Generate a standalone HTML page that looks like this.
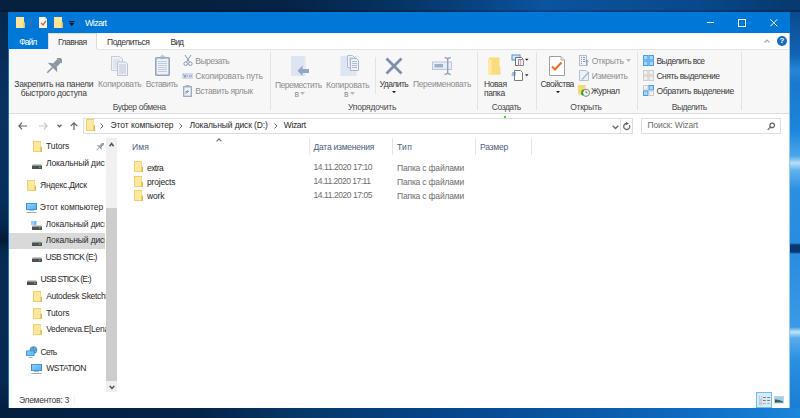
<!DOCTYPE html>
<html><head><meta charset="utf-8">
<style>
*{margin:0;padding:0;box-sizing:border-box}
html,body{width:800px;height:418px;overflow:hidden}
body{position:relative;font-family:"Liberation Sans",sans-serif;font-size:8.5px;color:#1e1e1e;
background:#062a55}
.a{position:absolute;white-space:nowrap}
.t{position:absolute;white-space:nowrap;line-height:10px;height:10px}
.dis{color:#8a8a8a}
.sep{position:absolute;width:1px;background:#e2e3e4}
.lbl{color:#4a4a4a}
</style></head><body>
<!-- wallpaper -->
<div class="a" style="left:0;top:0;width:800px;height:12px;background:linear-gradient(90deg,#06203f 0%,#06203f 25%,#062448 37%,#063464 50%,#084484 60%,#0b54a0 68%,#0a4f96 76%,#08498c 87%,#073a70 98%)"></div>
<div class="a" style="left:0;top:10px;width:800px;height:2px;background:rgba(0,10,30,0.25)"></div>
<div class="a" style="left:0;top:12px;width:8px;height:396px;background:linear-gradient(180deg,#05284f 0.00%,#0a3260 22.22%,#06305c 47.47%,#05284e 53.54%,#031a38 57.58%,#05284e 60.10%,#062c56 65.15%,#062a52 92.93%,#04203f 100.00%)"></div>
<div class="a" style="left:790px;top:12px;width:10px;height:396px;background:linear-gradient(180deg,#0b4a90 0.00%,#1164b4 10.86%,#2585d6 14.65%,#1a78cc 18.43%,#1b86dc 29.80%,#4aa6ea 36.36%,#b8def8 38.13%,#62b4ee 39.90%,#2a90e0 44.95%,#2a8ce0 58.33%,#083870 58.84%,#083870 60.61%,#2a8ce0 61.11%,#3a9ae6 79.55%,#c0e4fa 80.81%,#58acee 82.32%,#2a90e0 87.88%,#1a7ed4 100.00%)"></div>
<div class="a" style="left:0;top:408px;width:800px;height:10px;background:linear-gradient(90deg,#05203f 0%,#04244a 25%,#053866 37%,#064080 50%,#074b94 62%,#0a5aaa 75%,#0f6cc4 87%,#1a86dc 100%)"></div>
<!-- window frame -->
<div class="a" style="left:8px;top:12px;width:782px;height:396px;background:#fff;border-left:1px solid #1c6fc4"></div>
<div class="a" style="left:789px;top:33px;width:1px;height:375px;background:#9cc8ee"></div>
<!-- title bar -->
<div class="a" style="left:8px;top:12px;width:782px;height:21px;background:#0078d7"></div>
<svg class="a" style="left:16px;top:17px" width="9" height="11" viewBox="0 0 9 11"><rect x="0" y="0" width="8" height="11" fill="#fce59a"/><path d="M7.5 5.5 L9 5 V11 H7.5Z" fill="#e6bd4f"/></svg>
<div class="a" style="left:30px;top:18px;width:1.5px;height:8.5px;background:#2f70b8"></div>
<svg class="a" style="left:39px;top:17px" width="8" height="11" viewBox="0 0 8 11"><path d="M0 0H6L8 2V11H0Z" fill="#f6f6f6"/><path d="M6 0V2H8" fill="#ccc"/></svg>
<svg class="a" style="left:40px;top:20px" width="7" height="6" viewBox="0 0 7 6"><path d="M1 3 L3 5 L6 1" stroke="#e8632b" stroke-width="1.3" fill="none"/></svg>
<svg class="a" style="left:54px;top:17px" width="9" height="11" viewBox="0 0 9 11"><rect x="0" y="0" width="8" height="11" fill="#fce59a"/><path d="M7.5 5.5 L9 5 V11 H7.5Z" fill="#e6bd4f"/></svg>
<svg class="a" style="left:68.5px;top:21px" width="6" height="6" viewBox="0 0 6 6"><rect x="0" y="0" width="5.5" height="0.9" fill="#111"/><path d="M0 1.8 L5.5 1.8 L2.75 5Z" fill="#111"/></svg>
<div class="a" style="left:78.5px;top:18px;width:1.5px;height:8.5px;background:#2f70b8"></div>
<div class="a" style="left:706.5px;top:22px;width:7.5px;height:1px;background:#fff"></div>
<svg class="a" style="left:737px;top:18px" width="10" height="10" viewBox="0 0 10 10"><rect x="1.5" y="1.5" width="7" height="7" fill="none" stroke="#fff" stroke-width="1"/></svg>
<svg class="a" style="left:770px;top:18.5px" width="8" height="8" viewBox="0 0 8 8"><path d="M0.3 0.3L7.3 7.3M7.3 0.3L0.3 7.3" stroke="#fff" stroke-width="1"/></svg>
<!-- tabs -->
<div class="a" style="left:8px;top:33px;width:40px;height:16px;background:#0078d7"></div>
<div class="a" style="left:48px;top:33px;width:49px;height:17px;background:#f7f7f8;border:1px solid #dadbdc;border-bottom:none"></div>
<svg class="a" style="left:763.5px;top:38.5px" width="6" height="4" viewBox="0 0 6 4"><path d="M0.5 3.5L3 1L5.5 3.5" stroke="#aaa" stroke-width="1.2" fill="none"/></svg>
<div class="a" style="left:777px;top:36px;width:10px;height:10px;border-radius:50%;background:#1a6cc0;color:#fff;font-size:8px;font-weight:bold;text-align:center;line-height:10px">?</div>
<!-- ribbon -->
<div class="a" style="left:9px;top:49px;width:780px;height:65px;background:#f7f7f8;border-bottom:1px solid #dcdddf"></div>
<div class="a" style="left:97px;top:49px;width:692px;height:1px;background:#e2e3e4"></div>
<!-- pin -->
<svg class="a" style="left:46px;top:58px" width="16" height="16" viewBox="0 0 16 16"><g transform="translate(8.3,7.7) rotate(45) translate(0,-10)" fill="#8b95a0"><rect x="-4.6" y="0" width="9.2" height="3"/><rect x="-2.6" y="3" width="5.2" height="6"/><path d="M-2.6 9 L-6.8 12.5 L6.8 12.5 L2.6 9Z"/><rect x="-0.8" y="12.5" width="1.6" height="7.5"/></g></svg>
<!-- copy -->
<svg class="a" style="left:111px;top:56px" width="17" height="20" viewBox="0 0 17 20"><path d="M0.5 0.5H9L11.5 3V14.5H0.5Z" fill="#eef2f8" stroke="#c2ccda"/><path d="M2 4H9M2 6H9M2 8H9M2 10H9M2 12H9" stroke="#d0d8e4"/><path d="M6.5 6H14.5L16.5 8V19.5H6.5Z" fill="#eef2f8" stroke="#b8c3d3"/><path d="M8 9H15M8 11H15M8 13H15M8 15H15M8 17H15" stroke="#bac4d2"/></svg>
<!-- paste -->
<svg class="a" style="left:155px;top:55px" width="15" height="21" viewBox="0 0 15 21"><rect x="0.8" y="2.8" width="13.4" height="17.4" rx="0.8" fill="#eef2f8" stroke="#94a4bc" stroke-width="1.6"/><path d="M3 6.5H12M3 8.5H12M3 10.5H12M3 12.5H12M3 14.5H12M3 16.5H12" stroke="#c2cbd8"/><path d="M5 1.5H10V4H5Z" fill="#a6b3c6"/><rect x="6.5" y="0" width="2" height="2" fill="#b4bfd0"/></svg>
<!-- small clipboard items -->
<svg class="a" style="left:183px;top:55px" width="10" height="11" viewBox="0 0 10 11"><path d="M2 0 L6.5 7 M8 0 L3.5 7" stroke="#8896b0" stroke-width="1"/><circle cx="2.7" cy="8.7" r="1.8" fill="none" stroke="#8896b0"/><circle cx="7.3" cy="8.7" r="1.8" fill="none" stroke="#8896b0"/></svg>
<svg class="a" style="left:182px;top:73px" width="11" height="6" viewBox="0 0 11 6"><rect x="0" y="0" width="11" height="6" fill="#d2dbea"/><path d="M1.5 1.5L3 4.5M4 1.5L3 4.5M5 3H5.8M7 3H10" stroke="#7f8ea8" stroke-width="0.9"/></svg>
<svg class="a" style="left:183px;top:85px" width="9" height="12" viewBox="0 0 9 12"><rect x="0.7" y="1.7" width="7.6" height="9.6" fill="#eef2f8" stroke="#94a4bc" stroke-width="1.2"/><rect x="2.5" y="0" width="4" height="2.2" fill="#a6b3c6"/><path d="M3 9V6.5H5.5 M4.2 5.2L5.5 6.5L4.2 7.8" stroke="#7b8ca6" fill="none" stroke-width="0.9"/></svg>
<div class="sep" style="left:270px;top:52px;height:58px"></div>
<!-- organize -->
<svg class="a" style="left:291px;top:56px" width="19" height="20" viewBox="0 0 19 20"><rect x="0" y="0" width="15" height="20" fill="#dce5f1"/><rect x="13.5" y="0" width="1.5" height="20" fill="#e8eef6"/><path d="M6.5 14.8 L11.5 9.5 V13 H18 V17 H11.5 V20Z" fill="#94a6c4"/></svg>
<svg class="a" style="left:300px;top:92px" width="5" height="3" viewBox="0 0 5 3"><path d="M0 0H5L2.5 3Z" fill="#b8b8b8"/></svg>
<svg class="a" style="left:340px;top:55px" width="20" height="21" viewBox="0 0 20 21"><rect x="0.5" y="1" width="16" height="20" fill="#dce5f1"/><path d="M13 1V21" stroke="#e8eef6"/><path d="M7.5 0.5H12.5L14.5 2.5V12.5H7.5Z" fill="#eef2f8" stroke="#b0bdd0"/><path d="M9 3H13M9 5H13M9 7H13M9 9H13" stroke="#c4cedc"/><path d="M10.5 3.5H16.5L18.5 5.5V15.5H10.5Z" fill="#eef2f8" stroke="#a8b6ca"/><path d="M12 6.5H17M12 8.5H17M12 10.5H17M12 12.5H17" stroke="#b0bccc"/></svg>
<svg class="a" style="left:350px;top:92px" width="5" height="3" viewBox="0 0 5 3"><path d="M0 0H5L2.5 3Z" fill="#b8b8b8"/></svg>
<div class="sep" style="left:375px;top:57px;height:37px"></div>
<svg class="a" style="left:385px;top:57px" width="18" height="18" viewBox="0 0 18 18"><path d="M1.5 1.5 L16.5 16.5 M16.5 1.5 L1.5 16.5" stroke="#7d8eae" stroke-width="2.8"/></svg>
<svg class="a" style="left:392px;top:91.3px" width="4" height="3" viewBox="0 0 4 3"><path d="M0 0H4L2 2.2Z" fill="#222"/></svg>
<svg class="a" style="left:432px;top:57px" width="20" height="18" viewBox="0 0 20 18"><rect x="0.5" y="5" width="19" height="7.5" fill="#e8eef7" stroke="#b8c6da"/><rect x="2.5" y="7" width="8.5" height="3.5" fill="#9fb0cc"/><path d="M12.5 0.7 Q15.5 0.7 15.7 2.5 V15.5 Q15.5 17.3 12.5 17.3 M18.9 0.7 Q15.9 0.7 15.7 2.5 M18.9 17.3 Q15.9 17.3 15.7 15.5" stroke="#8a9cba" stroke-width="1.3" fill="none"/></svg>
<div class="sep" style="left:477px;top:52px;height:58px"></div>
<!-- new -->
<svg class="a" style="left:488px;top:57px" width="13" height="19" viewBox="0 0 13 19"><rect x="1" y="0.4" width="10.5" height="17.4" fill="#f9dc7f"/><path d="M11.5 10 L12.3 10.3 V17.8 H11.5Z" fill="#f0c85a"/><path d="M0 1.5 L3.6 3 V18.8 L0 17.4Z" fill="#fde8a6"/></svg>
<svg class="a" style="left:511px;top:54px" width="18" height="12" viewBox="0 0 18 12"><rect x="1" y="1" width="8" height="5" fill="#d6e8f8" stroke="#4f8fcc" stroke-width="1"/><path d="M4.5 3.5H10.5L12 5V11.5H4.5Z" fill="#fff" stroke="#707070"/><path d="M7.5 5.5H11.5L12.5 6.5V11.5H7.5Z" fill="#e8f0fa" stroke="#8a8a8a"/><path d="M9.5 6V11" stroke="#f0a0b0"/><path d="M14 4.8H17.5L15.75 6.8Z" fill="#222"/></svg>
<svg class="a" style="left:511px;top:70px" width="18" height="11" viewBox="0 0 18 11"><path d="M3.5 0.5H9.5L11.5 2.5V10.5H3.5Z" fill="#fff" stroke="#7a7a7a"/><path d="M1 3H5M0.5 5H4.5" stroke="#2a78d0" stroke-width="0.9"/><path d="M14 4.3H17.5L15.75 6.3Z" fill="#222"/></svg>
<div class="sep" style="left:536px;top:52px;height:58px"></div>
<!-- open -->
<svg class="a" style="left:549px;top:56px" width="16" height="20" viewBox="0 0 16 20"><path d="M0.5 0.5H12L15.5 4V19.5H0.5Z" fill="#fff" stroke="#a0a0a0"/><path d="M12 0.5V4H15.5" fill="#e8e8e8" stroke="#b0b0b0"/><path d="M3 10.5 L6 13.5 L12.5 6.5" stroke="#f06a24" stroke-width="2" fill="none"/></svg>
<svg class="a" style="left:555.5px;top:91.3px" width="4" height="3" viewBox="0 0 4 3"><path d="M0 0H4L2 2.2Z" fill="#222"/></svg>
<svg class="a" style="left:579px;top:55px" width="10" height="11" viewBox="0 0 10 11"><rect x="0.5" y="0.5" width="7" height="10" fill="#eef2f8" stroke="#b0bccc"/><path d="M2 2.5H3M4 2.5H6M2 4.5H3M4 4.5H6M2 6.5H3M4 6.5H6M2 8.5H3" stroke="#8a9ab2"/><path d="M8 5V11M6.5 6.5L8 5L9.5 6.5" stroke="#8a9ab2" fill="none"/></svg>
<svg class="a" style="left:626px;top:59px" width="5" height="3" viewBox="0 0 5 3"><path d="M0 0H5L2.5 3Z" fill="#b8b8b8"/></svg>
<svg class="a" style="left:579px;top:70px" width="11" height="11" viewBox="0 0 11 11"><path d="M0.5 0.5H7L9.5 3V10.5H0.5Z" fill="#eef2f8" stroke="#b4c0d2"/><path d="M3 9.5 L10 2" stroke="#a8b6ca" stroke-width="1.3"/></svg>
<svg class="a" style="left:578px;top:85px" width="12" height="12" viewBox="0 0 12 12"><rect x="0" y="0" width="7.5" height="9.5" fill="#f7d86e"/><circle cx="8" cy="7.8" r="3.6" fill="#f4f4f4" stroke="#7a7a7a" stroke-width="0.9"/><path d="M8 5.8V7.8H9.5" stroke="#555" stroke-width="0.7" fill="none"/><path d="M4.4 9.5 A3.6 3.6 0 0 1 5.5 5" stroke="#2aa02a" stroke-width="1.6" fill="none"/><path d="M3 8.5L4.4 10.8L6 8.6Z" fill="#2aa02a"/></svg>
<div class="sep" style="left:637px;top:52px;height:58px"></div>
<!-- select -->
<svg class="a" style="left:643px;top:55px" width="11" height="11" viewBox="0 0 11 11"><rect x="0.5" y="0.5" width="4.5" height="4.5" fill="#a6d4fa" stroke="#42a0ec"/><rect x="6.0" y="0.5" width="4.5" height="4.5" fill="#a6d4fa" stroke="#42a0ec"/><rect x="0.5" y="6.0" width="4.5" height="4.5" fill="#a6d4fa" stroke="#42a0ec"/><rect x="6.0" y="6.0" width="4.5" height="4.5" fill="#a6d4fa" stroke="#42a0ec"/></svg>
<svg class="a" style="left:643px;top:70px" width="11" height="11" viewBox="0 0 11 11"><rect x="0.5" y="0.5" width="4.5" height="4.5" fill="#f0f0f0" stroke="#cdcdcd"/><rect x="6.0" y="0.5" width="4.5" height="4.5" fill="#f0f0f0" stroke="#cdcdcd"/><rect x="0.5" y="6.0" width="4.5" height="4.5" fill="#f0f0f0" stroke="#cdcdcd"/><rect x="6.0" y="6.0" width="4.5" height="4.5" fill="#f0f0f0" stroke="#cdcdcd"/></svg>
<svg class="a" style="left:643px;top:85px" width="11" height="11" viewBox="0 0 11 11"><rect x="0.5" y="0.5" width="4.5" height="4.5" fill="#f0f0f0" stroke="#cdcdcd"/><rect x="6.0" y="0.5" width="4.5" height="4.5" fill="#a6d4fa" stroke="#42a0ec"/><rect x="0.5" y="6.0" width="4.5" height="4.5" fill="#a6d4fa" stroke="#42a0ec"/><rect x="6.0" y="6.0" width="4.5" height="4.5" fill="#f0f0f0" stroke="#cdcdcd"/></svg>
<div class="sep" style="left:741px;top:52px;height:58px"></div>
<!-- address row -->
<div class="a" style="left:504px;top:116px;width:2px;height:2px;background:#1ee81e"></div>
<svg class="a" style="left:18px;top:122px" width="9" height="8" viewBox="0 0 9 8"><path d="M9 4H1 M4 0.7 L0.9 4 L4 7.3" stroke="#606060" stroke-width="1.15" fill="none"/></svg>
<svg class="a" style="left:38.5px;top:122px" width="9" height="8" viewBox="0 0 9 8"><path d="M0 4H8 M5 0.7 L8.1 4 L5 7.3" stroke="#c6c6c6" stroke-width="1.15" fill="none"/></svg>
<svg class="a" style="left:57px;top:123.5px" width="5" height="4" viewBox="0 0 5 4"><path d="M0.5 0.8 L2.5 2.8 L4.5 0.8" stroke="#666" stroke-width="1.3" fill="none"/></svg>
<svg class="a" style="left:69.5px;top:122px" width="8" height="8" viewBox="0 0 8 8"><path d="M4 8V1 M0.7 4.1 L4 0.9 L7.3 4.1" stroke="#606060" stroke-width="1.15" fill="none"/></svg>
<div class="a" style="left:83px;top:118px;width:550px;height:15.5px;border:1px solid #dedede;background:#fff"></div>
<svg class="a" style="left:86px;top:119px" width="9" height="12" viewBox="0 0 9 12"><rect x="0" y="0" width="8" height="12" fill="#f2d064"/><rect x="1" y="1" width="6.5" height="10" fill="#fde8a2"/><path d="M7.5 6.5 L9 6 V12 H7.5Z" fill="#e4bb4c"/></svg>
<svg class="a" style="left:100px;top:123px" width="4" height="6" viewBox="0 0 4 6"><path d="M0.5 0.5 L3 3 L0.5 5.5" stroke="#666" fill="none"/></svg>
<svg class="a" style="left:179px;top:123px" width="4" height="6" viewBox="0 0 4 6"><path d="M0.5 0.5 L3 3 L0.5 5.5" stroke="#666" fill="none"/></svg>
<svg class="a" style="left:274px;top:123px" width="4" height="6" viewBox="0 0 4 6"><path d="M0.5 0.5 L3 3 L0.5 5.5" stroke="#666" fill="none"/></svg>
<svg class="a" style="left:611.5px;top:124.5px" width="7" height="5" viewBox="0 0 7 5"><path d="M0.7 0.7 L3.5 3.5 L6.3 0.7" stroke="#6a6a6a" stroke-width="1.3" fill="none"/></svg>
<div class="a" style="left:620px;top:119px;width:1px;height:14px;background:#e3e3e3"></div>
<svg class="a" style="left:623px;top:121.5px" width="8" height="9" viewBox="0 0 8 9"><path d="M6.4 3.2 A3 3 0 1 1 3.6 1.5" stroke="#6a6a6a" stroke-width="1.3" fill="none"/><path d="M3 0 L6 1.6 L3 3.2Z" fill="#6a6a6a"/></svg>
<div class="a" style="left:641px;top:118px;width:140px;height:15.5px;border:1px solid #dedede;background:#fff"></div>
<svg class="a" style="left:767px;top:121.5px" width="9" height="9" viewBox="0 0 9 9"><circle cx="5.2" cy="3.4" r="2.3" fill="none" stroke="#666" stroke-width="1.2"/><path d="M3.5 5.1 L0.7 7.9" stroke="#666" stroke-width="1.3"/></svg>
<!-- nav pane -->
<div class="a" style="left:106px;top:138px;width:11px;height:253.5px;background:#f0f0f0"></div>
<div class="a" style="left:106px;top:208px;width:11px;height:172.5px;background:#cdcdcd"></div>
<svg class="a" style="left:108.8px;top:142px" width="6" height="5" viewBox="0 0 6 5"><path d="M0.6 4.2 L2.6 1.6 L4.6 4.2" stroke="#505050" stroke-width="1.5" fill="none"/></svg>
<svg class="a" style="left:108.5px;top:384.5px" width="6" height="5" viewBox="0 0 6 5"><path d="M0.7 1 L3 3.5 L5.3 1" stroke="#505050" stroke-width="1.5" fill="none"/></svg>
<div class="a" style="left:9px;top:232.5px;width:96px;height:16px;background:#d9d9d9"></div>
<svg class="a" style="left:32.5px;top:141px" width="9" height="11" viewBox="0 0 9 11"><rect x="0" y="0" width="8" height="11" fill="#f2d064"/><rect x="1" y="1" width="6.5" height="9" fill="#fde8a2"/><path d="M7.5 6 L9 5.5 V11 H7.5Z" fill="#e4bb4c"/></svg>
<svg class="a" style="left:32px;top:164px" width="10" height="5" viewBox="0 0 10 5"><path d="M1 0H9L10 1.5H0Z" fill="#c9c9c9"/><rect x="0" y="1.5" width="10" height="3.5" fill="#505050"/><rect x="7" y="2.5" width="1.5" height="1.5" fill="#3fc03f"/></svg>
<svg class="a" style="left:27px;top:180px" width="9" height="11" viewBox="0 0 9 11"><rect x="0" y="0" width="8" height="11" fill="#f2d064"/><rect x="1" y="1" width="6.5" height="9" fill="#fde8a2"/><path d="M7.5 6 L9 5.5 V11 H7.5Z" fill="#e4bb4c"/></svg>
<svg class="a" style="left:26px;top:203px" width="11" height="10" viewBox="0 0 11 10"><defs><linearGradient id="mg" x1="0" y1="0" x2="1" y2="1"><stop offset="0" stop-color="#8fd2fb"/><stop offset="1" stop-color="#4fb0f4"/></linearGradient></defs><rect x="0" y="0" width="11" height="7" fill="#3a8cd6"/><rect x="1" y="0.8" width="9" height="5.4" fill="url(#mg)"/><rect x="3" y="7" width="5" height="1" fill="#b8c2cc"/><rect x="0.5" y="9" width="10" height="1" fill="#a0acb8"/></svg>
<svg class="a" style="left:32px;top:224.5px" width="10" height="5" viewBox="0 0 10 5"><path d="M1 0H9L10 1.5H0Z" fill="#c9c9c9"/><rect x="0" y="1.5" width="10" height="3.5" fill="#505050"/><rect x="7" y="2.5" width="1.5" height="1.5" fill="#3fc03f"/></svg>
<svg class="a" style="left:32px;top:241px" width="10" height="5" viewBox="0 0 10 5"><path d="M1 0H9L10 1.5H0Z" fill="#c9c9c9"/><rect x="0" y="1.5" width="10" height="3.5" fill="#505050"/><rect x="7" y="2.5" width="1.5" height="1.5" fill="#3fc03f"/></svg>
<svg class="a" style="left:32px;top:257px" width="10" height="5" viewBox="0 0 10 5"><path d="M1 0H9L10 1.5H0Z" fill="#c9c9c9"/><rect x="0" y="1.5" width="10" height="3.5" fill="#505050"/><rect x="7" y="2.5" width="1.5" height="1.5" fill="#3fc03f"/></svg>
<svg class="a" style="left:26.5px;top:279.5px" width="10" height="5" viewBox="0 0 10 5"><path d="M1 0H9L10 1.5H0Z" fill="#c9c9c9"/><rect x="0" y="1.5" width="10" height="3.5" fill="#505050"/><rect x="7" y="2.5" width="1.5" height="1.5" fill="#3fc03f"/></svg>
<svg class="a" style="left:33px;top:291px" width="9" height="11" viewBox="0 0 9 11"><rect x="0" y="0" width="8" height="11" fill="#f2d064"/><rect x="1" y="1" width="6.5" height="9" fill="#fde8a2"/><path d="M7.5 6 L9 5.5 V11 H7.5Z" fill="#e4bb4c"/></svg>
<svg class="a" style="left:33px;top:307.5px" width="9" height="11" viewBox="0 0 9 11"><rect x="0" y="0" width="8" height="11" fill="#f2d064"/><rect x="1" y="1" width="6.5" height="9" fill="#fde8a2"/><path d="M7.5 6 L9 5.5 V11 H7.5Z" fill="#e4bb4c"/></svg>
<svg class="a" style="left:33px;top:324px" width="9" height="11" viewBox="0 0 9 11"><rect x="0" y="0" width="8" height="11" fill="#f2d064"/><rect x="1" y="1" width="6.5" height="9" fill="#fde8a2"/><path d="M7.5 6 L9 5.5 V11 H7.5Z" fill="#e4bb4c"/></svg>
<svg class="a" style="left:25.5px;top:346px" width="12" height="12" viewBox="0 0 12 12"><circle cx="7.5" cy="4" r="3.8" fill="#4d95c8"/><path d="M5 1.5 Q7 3 6 6 M9 1 Q8 4 10 6" stroke="#8fc6e8" stroke-width="0.7" fill="none"/><rect x="0" y="4.5" width="8.5" height="5.5" fill="#3a8cd6"/><rect x="0.8" y="5.2" width="6.9" height="4.1" fill="#6cc2f8"/><rect x="2.5" y="11" width="4" height="1" fill="#a0acb8"/></svg>
<svg class="a" style="left:31.2px;top:364px" width="11" height="10" viewBox="0 0 11 10"><defs><linearGradient id="mg" x1="0" y1="0" x2="1" y2="1"><stop offset="0" stop-color="#8fd2fb"/><stop offset="1" stop-color="#4fb0f4"/></linearGradient></defs><rect x="0" y="0" width="11" height="7" fill="#3a8cd6"/><rect x="1" y="0.8" width="9" height="5.4" fill="url(#mg)"/><rect x="3" y="7" width="5" height="1" fill="#b8c2cc"/><rect x="0.5" y="9" width="10" height="1" fill="#a0acb8"/></svg>
<svg class="a" style="left:31px;top:220.5px" width="6" height="4" viewBox="0 0 6 4"><path d="M0 1H5M0 3H5" stroke="#3aa0f0" stroke-width="1"/><path d="M3.5 0L5.5 1L3.5 2M3.5 2L5.5 3L3.5 4" stroke="#3aa0f0" stroke-width="0.6" fill="none"/></svg>

<svg class="a" style="left:96px;top:143px" width="8" height="8" viewBox="0 0 8 8"><g transform="translate(4.2,3.6) rotate(45) translate(0,-5)" fill="#8d9aa5"><rect x="-2.3" y="0" width="4.6" height="1.6"/><rect x="-1.3" y="1.6" width="2.6" height="3"/><path d="M-1.3 4.6 L-3.4 6.3 L3.4 6.3 L1.3 4.6Z"/><rect x="-0.45" y="6.3" width="0.9" height="3.9"/></g></svg>
<!-- list header -->
<svg class="a" style="left:215.5px;top:137.5px" width="6" height="4" viewBox="0 0 6 4"><path d="M0.6 3.4 L3 0.9 L5.4 3.4" stroke="#707070" stroke-width="1.2" fill="none"/></svg>
<div class="a" style="left:309px;top:138px;width:1px;height:17px;background:#e5e5e5"></div>
<div class="a" style="left:392px;top:138px;width:1px;height:17px;background:#e5e5e5"></div>
<div class="a" style="left:475px;top:138px;width:1px;height:17px;background:#e5e5e5"></div>
<div class="a" style="left:531px;top:138px;width:1px;height:17px;background:#e5e5e5"></div>
<svg class="a" style="left:134px;top:161px" width="9" height="11" viewBox="0 0 9 11"><rect x="0" y="0" width="8" height="11" fill="#f2d064"/><rect x="1" y="1" width="6.5" height="9" fill="#fde8a2"/><path d="M7.5 6 L9 5.5 V11 H7.5Z" fill="#e4bb4c"/></svg>
<svg class="a" style="left:134px;top:175.5px" width="9" height="11" viewBox="0 0 9 11"><rect x="0" y="0" width="8" height="11" fill="#f2d064"/><rect x="1" y="1" width="6.5" height="9" fill="#fde8a2"/><path d="M7.5 6 L9 5.5 V11 H7.5Z" fill="#e4bb4c"/></svg>
<svg class="a" style="left:134px;top:190px" width="9" height="11" viewBox="0 0 9 11"><rect x="0" y="0" width="8" height="11" fill="#f2d064"/><rect x="1" y="1" width="6.5" height="9" fill="#fde8a2"/><path d="M7.5 6 L9 5.5 V11 H7.5Z" fill="#e4bb4c"/></svg>

<!-- status -->
<div class="a" style="left:74px;top:394px;width:1px;height:12px;background:#f2f2f2"></div>
<div class="a" style="left:756px;top:392px;width:16px;height:16px;background:#d6ebf8;border:1px solid #70bdea"></div>
<svg class="a" style="left:759px;top:395.5px" width="11" height="10" viewBox="0 0 11 10"><rect x="0.3" y="0" width="2.6" height="9" fill="#ececec" stroke="#b0b0b0" stroke-width="0.5"/><rect x="0.8" y="3" width="1.6" height="2" fill="#9cc0f0"/><rect x="0.8" y="6.2" width="1.6" height="2" fill="#f0a8a8"/><path d="M4 1.5H6.8M8.2 1.5H11M4 4.5H6.8M8.2 4.5H11" stroke="#707070" stroke-width="0.9"/><path d="M4 7.5H6.8M8.2 7.5H11" stroke="#a8a8a8" stroke-width="0.9"/></svg>
<svg class="a" style="left:774px;top:396px" width="10" height="8" viewBox="0 0 10 8"><rect x="0" y="0" width="10" height="7.5" fill="#d0d0d0"/><rect x="1" y="1" width="8" height="5.5" fill="#9cd0f4"/><path d="M1 3.5 Q4 3 9 5.5 V6.5 H1Z" fill="#2a6a70"/><path d="M1 5 L3 4.5 L1 6.5Z" fill="#1a4a50"/></svg>
<div class="t" style="left:85.00px;top:17.50px;color:#fff;letter-spacing:-0.680px;font-size:9px">Wizart</div>
<div class="t" style="left:19.25px;top:36.90px;color:#fff;letter-spacing:-0.950px">Файл</div>
<div class="t" style="left:58.00px;top:36.90px;color:#333;letter-spacing:-0.542px">Главная</div>
<div class="t" style="left:107.00px;top:36.75px;color:#333;letter-spacing:-0.444px">Поделиться</div>
<div class="t" style="left:170.50px;top:36.75px;color:#333;letter-spacing:-1.000px">Вид</div>
<div class="t" style="left:14.30px;top:79.00px;color:#3a3a3a;letter-spacing:-0.206px">Закрепить на панели</div>
<div class="t" style="left:20.80px;top:88.00px;color:#3a3a3a;letter-spacing:-0.267px">быстрого доступа</div>
<div class="t" style="left:98.00px;top:79.00px;color:#8d8d8d;letter-spacing:-0.222px">Копировать</div>
<div class="t" style="left:145.80px;top:79.00px;color:#8d8d8d;letter-spacing:-0.543px">Вставить</div>
<div class="t" style="left:195.30px;top:55.60px;color:#8d8d8d;letter-spacing:-0.500px">Вырезать</div>
<div class="t" style="left:195.30px;top:71.00px;color:#8d8d8d;letter-spacing:-0.173px">Скопировать путь</div>
<div class="t" style="left:195.30px;top:85.90px;color:#8d8d8d;letter-spacing:-0.354px">Вставить ярлык</div>
<div class="t" style="left:112.70px;top:102.00px;color:#4a4a4a;letter-spacing:-0.400px">Буфер обмена</div>
<div class="t" style="left:274.90px;top:79.60px;color:#8d8d8d;letter-spacing:-0.490px">Переместить</div>
<div class="t" style="left:294.40px;top:88.50px;color:#8d8d8d;letter-spacing:-0.120px">в</div>
<div class="t" style="left:326.00px;top:79.60px;color:#8d8d8d;letter-spacing:-0.222px">Копировать</div>
<div class="t" style="left:344.00px;top:88.50px;color:#8d8d8d;letter-spacing:-0.120px">в</div>
<div class="t" style="left:379.50px;top:79.40px;color:#3a3a3a;letter-spacing:-0.533px">Удалить</div>
<div class="t" style="left:412.90px;top:79.40px;color:#8d8d8d;letter-spacing:-0.325px">Переименовать</div>
<div class="t" style="left:348.00px;top:101.90px;color:#4a4a4a;letter-spacing:-0.220px">Упорядочить</div>
<div class="t" style="left:483.90px;top:79.40px;color:#3a3a3a;letter-spacing:-0.375px">Новая</div>
<div class="t" style="left:483.90px;top:88.20px;color:#3a3a3a;letter-spacing:-0.325px">папка</div>
<div class="t" style="left:491.80px;top:101.50px;color:#4a4a4a;letter-spacing:-0.467px">Создать</div>
<div class="t" style="left:540.40px;top:79.40px;color:#3a3a3a;letter-spacing:-0.486px">Свойства</div>
<div class="t" style="left:591.70px;top:55.60px;color:#8d8d8d;letter-spacing:-0.200px">Открыть</div>
<div class="t" style="left:591.70px;top:71.00px;color:#8d8d8d;letter-spacing:-0.300px">Изменить</div>
<div class="t" style="left:590.90px;top:85.90px;color:#3a3a3a;letter-spacing:-0.380px">Журнал</div>
<div class="t" style="left:570.20px;top:101.50px;color:#4a4a4a;letter-spacing:-0.267px">Открыть</div>
<div class="t" style="left:656.40px;top:55.60px;color:#3a3a3a;letter-spacing:-0.573px">Выделить все</div>
<div class="t" style="left:656.40px;top:71.00px;color:#3a3a3a;letter-spacing:-0.457px">Снять выделение</div>
<div class="t" style="left:656.40px;top:85.90px;color:#3a3a3a;letter-spacing:-0.365px">Обратить выделение</div>
<div class="t" style="left:671.80px;top:101.50px;color:#4a4a4a;letter-spacing:-0.543px">Выделить</div>
<div class="t" style="left:110.50px;top:120.00px;color:#2a2a2a;letter-spacing:-0.038px">Этот компьютер</div>
<div class="t" style="left:189.50px;top:120.00px;color:#2a2a2a;letter-spacing:-0.111px">Локальный диск (D:)</div>
<div class="t" style="left:283.75px;top:120.00px;color:#2a2a2a;letter-spacing:-0.350px">Wizart</div>
<div class="t" style="left:647.50px;top:120.00px;color:#6d6d6d;letter-spacing:-0.146px">Поиск: Wizart</div>
<div class="t" style="left:46.00px;top:140.70px;color:#2a2a2a;letter-spacing:-0.100px">Tutors</div>
<div class="t" style="left:46.00px;top:157.90px;color:#2a2a2a;letter-spacing:-0.120px;width:59.00px;overflow:hidden">Локальный диск (D:)</div>
<div class="t" style="left:40.00px;top:180.00px;color:#2a2a2a;letter-spacing:-0.250px">Яндекс.Диск</div>
<div class="t" style="left:39.80px;top:201.90px;color:#2a2a2a;letter-spacing:-0.015px">Этот компьютер</div>
<div class="t" style="left:45.60px;top:218.80px;color:#2a2a2a;letter-spacing:-0.120px;width:59.40px;overflow:hidden">Локальный диск (C:)</div>
<div class="t" style="left:45.60px;top:234.90px;color:#2a2a2a;letter-spacing:-0.120px;width:59.40px;overflow:hidden">Локальный диск (D:)</div>
<div class="t" style="left:45.60px;top:252.00px;color:#2a2a2a;letter-spacing:-0.700px">USB STICK (E:)</div>
<div class="t" style="left:40.60px;top:274.40px;color:#2a2a2a;letter-spacing:-0.762px">USB STICK (E:)</div>
<div class="t" style="left:46.20px;top:291.00px;color:#2a2a2a;letter-spacing:-0.300px;width:59.60px;overflow:hidden">Autodesk Sketchbook</div>
<div class="t" style="left:46.20px;top:307.90px;color:#2a2a2a;letter-spacing:-0.100px">Tutors</div>
<div class="t" style="left:46.20px;top:324.30px;color:#2a2a2a;letter-spacing:-0.300px;width:59.60px;overflow:hidden">Vedeneva.E[Lena]</div>
<div class="t" style="left:40.60px;top:347.00px;color:#2a2a2a;letter-spacing:-0.733px">Сеть</div>
<div class="t" style="left:46.20px;top:363.00px;color:#2a2a2a;letter-spacing:-0.486px">WSTATION</div>
<div class="t" style="left:132.00px;top:141.60px;color:#4c607a;letter-spacing:0.125px">Имя</div>
<div class="t" style="left:313.50px;top:142.00px;color:#4c607a;letter-spacing:-0.238px">Дата изменения</div>
<div class="t" style="left:397.00px;top:142.00px;color:#4c607a;letter-spacing:0.300px">Тип</div>
<div class="t" style="left:480.00px;top:142.00px;color:#4c607a;letter-spacing:-0.200px">Размер</div>
<div class="t" style="left:147.00px;top:162.50px;color:#1e1e1e;letter-spacing:-0.562px">extra</div>
<div class="t" style="left:147.00px;top:177.00px;color:#1e1e1e;letter-spacing:-0.179px">projects</div>
<div class="t" style="left:147.00px;top:191.25px;color:#1e1e1e;letter-spacing:-0.167px">work</div>
<div class="t" style="left:313.50px;top:161.80px;color:#6d6d6d;letter-spacing:-0.433px">14.11.2020 17:10</div>
<div class="t" style="left:313.50px;top:175.90px;color:#6d6d6d;letter-spacing:-0.500px">14.11.2020 17:11</div>
<div class="t" style="left:313.50px;top:190.30px;color:#6d6d6d;letter-spacing:-0.433px">14.11.2020 17:05</div>
<div class="t" style="left:397.00px;top:162.50px;color:#6d6d6d;letter-spacing:-0.186px">Папка с файлами</div>
<div class="t" style="left:397.00px;top:176.60px;color:#6d6d6d;letter-spacing:-0.186px">Папка с файлами</div>
<div class="t" style="left:397.00px;top:191.00px;color:#6d6d6d;letter-spacing:-0.186px">Папка с файлами</div>
<div class="t" style="left:18.90px;top:395.30px;color:#3a3a3a;letter-spacing:-0.264px">Элементов: 3</div>
</body></html>
